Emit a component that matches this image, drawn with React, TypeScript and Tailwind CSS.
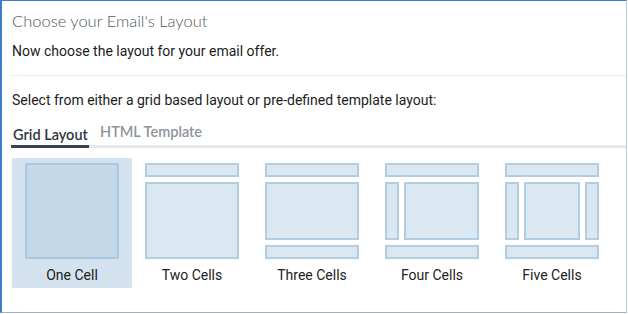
import React from "react";

const box = "border-2 border-[#b0cde2] bg-[#dce8f1]";

function CellIcon({ kind }: { kind: number }) {
  if (kind === 1) {
    return <div className="w-[94px] h-[96px] border-2 border-[#a9c8de] bg-[#c4d9e8]" />;
  }
  return (
    <div className="w-[94px] h-[96px] flex flex-col gap-[5px]">
      <div className={`h-[14px] ${box}`} />
      <div className="flex-1 flex gap-[5px]">
        {kind >= 4 && <div className={`w-[14px] ${box}`} />}
        <div className={`flex-1 ${box}`} />
        {kind === 5 && <div className={`w-[14px] ${box}`} />}
      </div>
      {kind >= 3 && <div className={`h-[14px] ${box}`} />}
    </div>
  );
}

const cells = ["One Cell", "Two Cells", "Three Cells", "Four Cells", "Five Cells"];

export default function App() {
  return (
    <div className="w-[628px] h-[314px] bg-white overflow-hidden">
      <div className="w-[627px] h-[313px] border-l-2 border-t border-r border-b border-l-[#3d7cc9] border-t-[#3d7cc9] border-r-[#bccbdb] border-b-[#9fb0c4] flex flex-col font-['Roboto',sans-serif]">
        <h1 className="ml-[10px] mt-[10px] text-[16.5px] leading-[20px] font-light text-[#4f5964] font-['Lato',sans-serif]">
          Choose your Email's Layout
        </h1>
        <p className="ml-[10px] mt-[10px] text-[14px] leading-[20px] text-[#1c1c1c]">
          Now choose the layout for your email offer.
        </p>
        <div className="ml-[10px] mt-[14px] border-t border-[#ececec]" />
        <p className="ml-[10px] mt-[14px] text-[14px] leading-[20px] text-[#1c1c1c]">
          Select from either a grid based layout or pre-defined template layout:
        </p>
        <div className="ml-[9px] mt-[13px] flex items-end border-b-[3px] border-[#e8e8e8] h-[25px] whitespace-nowrap">
          <div className="px-[2px] h-[25px] -mb-[3px] border-b-[3px] border-[#36424f] text-[14.5px] leading-[24px] font-semibold text-[#2f3640] font-['Lato',sans-serif] w-[78px]">
            Grid Layout
          </div>
          <div className="ml-[11px] h-[25px] text-[14.5px] leading-[24px] font-semibold text-[#8d949c] font-['Lato',sans-serif]">
            HTML Template
          </div>
        </div>
        <div className="ml-[10px] mt-[10px] flex">
          {cells.map((c, i) => (
            <div
              key={c}
              className={`w-[120px] h-[130px] pt-[5px] flex flex-col items-center rounded-[2px] ${i === 0 ? "bg-[#d3e2ee]" : ""}`}
            >
              <CellIcon kind={i + 1} />
              <div className="mt-[7px] text-[14px] leading-[18px] text-[#222]">{c}</div>
            </div>
          ))}
        </div>
      </div>
    </div>
  );
}
